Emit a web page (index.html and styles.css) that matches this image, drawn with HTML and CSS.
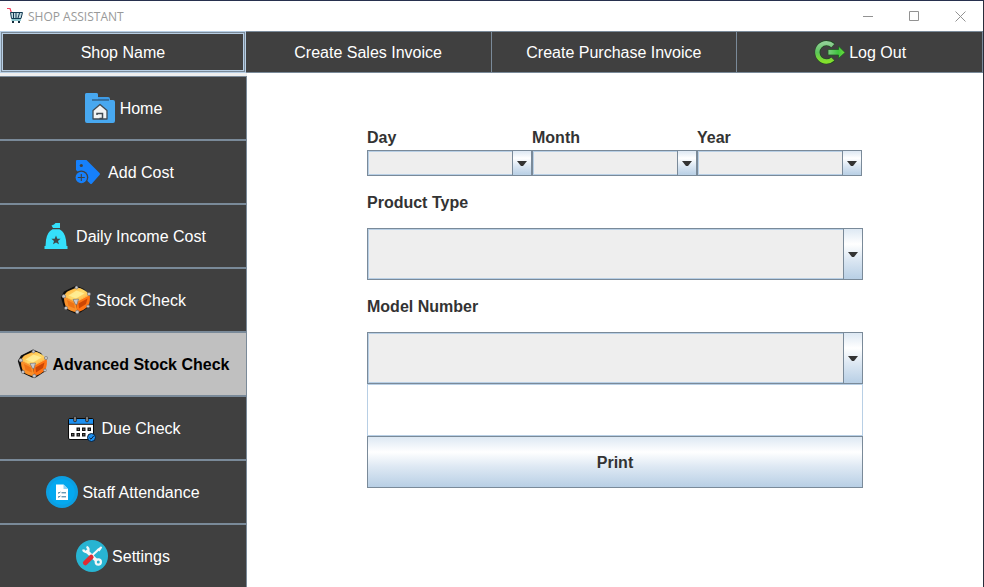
FILE: index.html
```html
<!DOCTYPE html>
<html lang="en">
<head>
<meta charset="utf-8">
<title>SHOP ASSISTANT</title>
<link rel="stylesheet" href="styles.css">
</head>
<body>
<svg class="defs" aria-hidden="true">
  <defs>
    <linearGradient id="box-top" x1="0" y1="0" x2="1" y2="1"><stop offset="0" stop-color="#ff9f2a"/><stop offset=".5" stop-color="#ffdc6c"/><stop offset="1" stop-color="#ffa030"/></linearGradient>
    <linearGradient id="ring" x1="0" y1="0" x2="0" y2="1"><stop offset="0" stop-color="#8fcf94"/><stop offset=".5" stop-color="#5cc45c"/><stop offset="1" stop-color="#84e02c"/></linearGradient>
    <linearGradient id="arrow" x1="0" y1="0" x2="1" y2="0"><stop offset="0" stop-color="#7ccf80"/><stop offset=".6" stop-color="#3fc43f"/><stop offset="1" stop-color="#6fe03a"/></linearGradient>
    <symbol id="crate" viewBox="0 0 32 32">
      <path d="M16 1.5 4 7.5 .8 13 4 23.5 6.5 25.5 15 29.5 18 30 28 23.5 29 12 24 5Z" fill="#0d0d0d"/>
      <path d="M4 12.5Q5.5 8 8.5 7L16.5 3.5Q25 4.5 29.5 11L16 18.5Z" fill="url(#box-top)"/>
      <path d="M8.5 11.5 16.5 6.5 24.5 9.5 16 14.5Z" fill="#fff3a0" opacity=".75"/>
      <path d="M4 12.5 16 18 17.5 28.5Q10 27 6.5 24 3.5 18 4 12.5Z" fill="#f9902a"/>
      <path d="M7 16 14 19.5 15 24.5 8.5 22Z" fill="#ee7416"/>
      <path d="M16 18 29.5 10.5Q31 16 28 22.5 23.5 26.5 17.5 28.5Z" fill="#ff7414"/>
      <path d="M18.5 19.5 27.5 14.5 26 20 19 24.5Z" fill="#cc4604"/>
      <path d="M4.5 12.5 16 18 29 11" fill="none" stroke="#ffb94c"/>
      <g fill="#c8c8cc" stroke="#6d6d70" stroke-width=".6"><path d="M13 15.5 18.5 15 17 20.5H15.5Z"/><circle cx="16.5" cy="3.4" r="1.5"/><circle cx="29" cy="10" r="1.6"/><circle cx="3.8" cy="12.3" r="1.8"/><circle cx="6" cy="24" r="1.6"/><circle cx="17.3" cy="28" r="1.8"/><circle cx="28" cy="22.3" r="1.4"/></g>
    </symbol>
  </defs>
</svg>
<div class="window">
  <header class="titlebar">
    <svg class="logo" viewBox="0 0 16 16" aria-hidden="true">
      <path d="M0 .5H3L4.5 5" fill="none" stroke="#f0405c" stroke-width="1.2"/>
      <path d="M3.5 4.5H15.5L14 10.5H4.5Z" fill="#c5dbe2" stroke="#123a52" stroke-width="1"/>
      <path d="M6.5 5v5M9 5v5M12.5 5 11 10" stroke="#123a52"/>
      <path d="M4.5 12H14" stroke="#1b8c9c"/>
      <path d="M5 13h2v2H5zM11 13h2v2h-2z" fill="#142c3c"/>
    </svg>
    <h1>SHOP ASSISTANT</h1>
    <div class="controls">
      <button type="button" aria-label="Minimize"><svg viewBox="0 0 11 11"><path d="M0 5.5H10"/></svg></button>
      <button type="button" aria-label="Maximize"><svg viewBox="0 0 11 11"><path d="M.5.5H9.5V9.5H.5Z"/></svg></button>
      <button type="button" aria-label="Close"><svg viewBox="0 0 11 11"><path d="M.5.5 10.5 10.5M10.5.5.5 10.5"/></svg></button>
    </div>
  </header>
  <nav class="topnav">
    <button type="button" class="focused"><span>Shop Name</span></button>
    <button type="button"><span>Create Sales Invoice</span></button>
    <button type="button"><span>Create Purchase Invoice</span></button>
    <button type="button">
      <svg class="icon" viewBox="0 0 32 32" aria-hidden="true">
        <path d="M20 9.6A9.2 9.2 0 1 0 20 23" fill="none" stroke="#1d4a20" stroke-width="5.6"/>
        <path d="M19.8 9.6A9.2 9.2 0 1 0 19.8 23" fill="none" stroke="url(#ring)" stroke-width="4.4"/>
        <path d="M15 13.5H25.5V10L32 16.5 25.5 22.5V19H15Z" fill="url(#arrow)" stroke="#1f5a22" stroke-width=".8"/>
      </svg>
      <span>Log Out</span>
    </button>
  </nav>
  <div class="body">
    <nav class="sidebar">
      <button type="button">
        <svg class="icon" viewBox="0 0 32 32" aria-hidden="true">
          <path d="M1 3Q1 1 3 1H12Q14 1 14 3V5H24Q26 5 26 7V12H1Z" fill="#3e9be6"/>
          <path d="M1 3Q1 1 3 1H12Q14 1 14 3V8H29Q31 8 31 10V29Q31 31 29 31H3Q1 31 1 29Z" fill="#48a8f0"/>
          <path d="M8 8H25" stroke="#27415a"/>
          <path d="M9 18.5 16 12.5 23 18.5V27H9Z" fill="#f1f3f4" stroke="#414a52" stroke-width="1.3" stroke-linejoin="round"/>
          <path d="M13 23V21.5H18.5V26.5H15.5" fill="none" stroke="#414a52" stroke-width="1.5"/>
        </svg>
        <span>Home</span>
      </button>
      <button type="button">
        <svg class="icon" viewBox="0 0 32 32" aria-hidden="true">
          <path d="M5 4H14.5L27.5 17Q28.5 18 27.5 19L20 27.5Q19 28.5 18 27.5L4 14V5Q4 4 5 4Z" fill="#1680fb"/>
          <circle cx="9.3" cy="9.5" r="1.6" fill="#404040"/>
          <circle cx="9.3" cy="21.5" r="7" fill="#404040"/>
          <circle cx="9.3" cy="21.5" r="5.7" fill="#1680fb"/>
          <path d="M9.3 18V25M5.8 21.5H12.8" stroke="#404040" stroke-width="1.1"/>
        </svg>
        <span>Add Cost</span>
      </button>
      <button type="button">
        <svg class="icon" viewBox="0 0 32 32" aria-hidden="true">
          <path d="M11.5 5.5 14 4.5 15.5 3H20V8H13Z" fill="#35e0fb"/>
          <path d="M12.5 9.2H19.5Q25 12 26 20L26.5 26H27.5V29H4.5V26H5.5L6 20Q7 12 12.5 9.2Z" fill="#35e0fb"/>
          <path d="M16 15.5 17.3 18.7 20.6 18.8 18 21 19 24.3 16 22.4 13 24.3 14 21 11.4 18.8 14.7 18.7Z" fill="#3f484a"/>
        </svg>
        <span>Daily Income Cost</span>
      </button>
      <button type="button"><svg class="icon" aria-hidden="true"><use href="#crate"/></svg><span>Stock Check</span></button>
      <button type="button" class="selected" aria-current="page"><svg class="icon" aria-hidden="true"><use href="#crate"/></svg><span>Advanced Stock Check</span></button>
      <button type="button">
        <svg class="icon" viewBox="0 0 32 32" aria-hidden="true">
          <rect x="3.5" y="6.5" width="25" height="21" rx="1.5" fill="#fff" stroke="#080808"/>
          <path d="M4 7H28V12H4Z" fill="#1e90f0"/>
          <path d="M3.5 12.3H28.5" stroke="#080808"/>
          <path d="M10 5.5V8.5M22 5.5V8.5" stroke="#222" stroke-width="3.4" stroke-linecap="round"/>
          <path d="M10 5.5V8.5M22 5.5V8.5" stroke="#858585" stroke-width="1.8" stroke-linecap="round"/>
          <path d="M11.5 15.5h3.5v3.5h-3.5zM17 15.5h3.5v3.5H17zM22.5 15.5H26v3.5h-3.5zM6 21h3.5v3.5H6zM11.5 21h3.5v3.5h-3.5zM17 21h3.5v3.5H17z" fill="#111"/>
          <path d="M12.8 16.8h1v1h-1zM18.3 16.8h1v1h-1zM23.8 16.8h1v1h-1zM7.3 22.3h1v1h-1zM12.8 22.3h1v1h-1zM18.3 22.3h1v1h-1z" fill="#aaa"/>
          <circle cx="26.5" cy="25.5" r="4" fill="#1e90f0" stroke="#0b1d33"/>
          <path d="M24.5 25.8 26 27.2 28.8 23.8" fill="none" stroke="#0b1d33"/>
        </svg>
        <span>Due Check</span>
      </button>
      <button type="button">
        <svg class="icon" viewBox="0 0 32 32" aria-hidden="true">
          <circle cx="16" cy="16" r="16" fill="#0c9fe2"/><circle cx="16" cy="16" r="12.8" fill="#04a9f0"/>
          <path d="M10 8.5H17.5L22 13V24H10Z" fill="#fff"/><path d="M17.5 8.5V13H22Z" fill="#8fd3f5"/>
          <path d="M12 16.5 13 17.3 14.3 15.8M12 20.5 13 21.3 14.3 19.8M15.5 16.8H20M15.5 20.8H20" fill="none" stroke="#2c6f96"/>
        </svg>
        <span>Staff Attendance</span>
      </button>
      <button type="button">
        <svg class="icon" viewBox="0 0 32 32" aria-hidden="true">
          <circle cx="16" cy="16" r="16" fill="#28b4d2"/>
          <path d="M10 10.5 21.5 21.5" stroke="#f4f7f8" stroke-width="3.4"/>
          <path d="M7.2 9.5A3 3 0 0 0 12 11.3 3 3 0 0 0 10.5 6.8" fill="none" stroke="#f4f7f8" stroke-width="2.4"/>
          <circle cx="22.3" cy="22" r="2.6" fill="#28b4d2" stroke="#f4f7f8" stroke-width="2.2"/>
          <path d="M15 16.5 23 9" stroke="#f5f7f8" stroke-width="2.2"/>
          <path d="M21 9.5 25 6.2 26.2 7.4 23.5 11.5Z" fill="#f5f7f8"/>
          <path d="M9.2 23 15.3 17" stroke="#df2c34" stroke-width="4.6" stroke-linecap="round"/>
        </svg>
        <span>Settings</span>
      </button>
    </nav>
    <main>
      <form class="form">
        <div class="dates">
          <div class="field"><label for="day">Day</label><div class="combo small"><select id="day"></select></div></div>
          <div class="field"><label for="month">Month</label><div class="combo small"><select id="month"></select></div></div>
          <div class="field"><label for="year">Year</label><div class="combo small"><select id="year"></select></div></div>
        </div>
        <label for="product">Product Type</label>
        <div class="combo"><select id="product"></select></div>
        <label for="model">Model Number</label>
        <div class="combo"><select id="model"></select></div>
        <input type="text" aria-label="Model number search">
        <button type="button" class="print"><span>Print</span></button>
      </form>
    </main>
  </div>
</div>
</body>
</html>
```
FILE: styles.css
```css
:root {
  --edge: #7a8a99;
  --highlight: #b8cfe5;
  --dark: #404040;
  --metal: linear-gradient(#dde8f3 0%, #ffffff 30%, #dde8f3 60%, #b8cfe5 100%);
}

*, *::before, *::after { box-sizing: border-box; }

body {
  margin: 0;
  height: 100vh;
  overflow: hidden;
  font-family: "Liberation Sans", Arial, sans-serif;
  font-size: 16px;
  color: #333;
}

button, input, select {
  margin: 0;
  font: inherit;
  border-radius: 0;
}
button span { display: block; padding-top: 2px; }

.defs { position: absolute; width: 0; height: 0; }

.window {
  min-height: 100vh;
  display: flex;
  flex-direction: column;
  background: #fff;
  border-top: 1px solid #27304e;
  border-right: 1px solid #2a2d3a;
}

.titlebar {
  display: flex;
  align-items: center;
  height: 30px;
  padding-left: 7px;
}
.titlebar h1 {
  margin: 0 auto 0 5px;
  font: 12px "Open Sans", sans-serif;
  color: #999;
}
.logo { width: 16px; height: 16px; }
.controls { display: flex; height: 100%; }
.controls button {
  width: 46px;
  padding: 0;
  border: 0;
  background: none;
  display: grid;
  place-items: center;
}
.controls svg {
  width: 11px;
  height: 11px;
  fill: none;
  stroke: #929292;
}

.topnav {
  display: grid;
  grid-template-columns: repeat(4, 1fr);
  height: 42px;
}
.topnav button, .sidebar button {
  display: flex;
  align-items: center;
  justify-content: center;
  gap: 4px;
  padding: 0;
  border: 1px solid var(--edge);
  background: var(--dark);
  color: #fff;
  white-space: nowrap;
}
.topnav button { border-left-width: 0; }
.topnav .focused {
  border: 1px solid var(--highlight);
  box-shadow: inset 0 0 0 1px var(--edge), inset 0 0 0 2px var(--highlight);
}
.icon { width: 32px; height: 32px; flex: none; }

.body { display: flex; flex: 1; }
.sidebar {
  width: 247px;
  flex: none;
  border-top: 3px solid #eee;
}
.sidebar button {
  width: 100%;
  height: 64px;
  border-left: 0;
}
.sidebar .selected {
  background: #c0c0c0;
  color: #000;
  font-weight: bold;
}

main { flex: 1; padding: 51px 120px; }
.form { display: flex; flex-direction: column; font-weight: bold; }
.form label { height: 52px; line-height: 54px; }
.dates { display: flex; padding-right: 1px; }
.field { flex: 1; }
.form .field label { display: block; height: 26px; line-height: 28px; }

.combo { position: relative; height: 52px; }
.combo.small { height: 26px; }
.combo select {
  display: block;
  width: 100%;
  height: 100%;
  padding: 0 24px 0 4px;
  appearance: none;
  border: 1px solid var(--edge);
  background: #eee;
  box-shadow: inset 0 0 0 1px var(--highlight);
}
/* Drop-down button at the right edge of the combo box */
.combo::before {
  content: "";
  position: absolute;
  inset: 0 0 0 auto;
  width: 20px;
  border: 1px solid var(--edge);
  background: var(--metal);
  pointer-events: none;
}
.combo::after {
  content: "";
  position: absolute;
  right: 5px;
  top: calc(50% - 2px);
  width: 10px;
  height: 5px;
  background: #333;
  clip-path: polygon(0 0, 100% 0, 60% 100%, 40% 100%);
  pointer-events: none;
}

.form input {
  height: 52px;
  padding: 0 4px;
  border: 1px solid var(--highlight);
  background: #fff;
}
.print {
  height: 52px;
  border: 1px solid var(--edge);
  background: var(--metal);
  color: #333;
}
```
